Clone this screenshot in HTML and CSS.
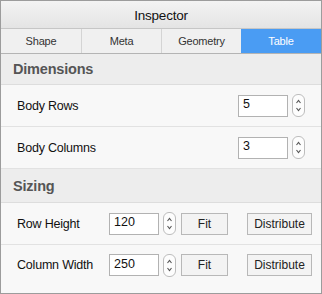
FILE: index.html
```html
<!DOCTYPE html>
<html lang="en">
<head>
    <meta charset="UTF-8">
    <title>Inspector</title>
    <link rel="stylesheet" href="styles.css">
</head>
<body>
    <div class="inspector">
        <div class="title-bar">Inspector</div>

        <div class="tabs">
            <div class="tab">Shape</div>
            <div class="tab">Meta</div>
            <div class="tab">Geometry</div>
            <div class="tab active">Table</div>
        </div>

        <!-- Dimensions -->
        <div class="section-header">Dimensions</div>
        <div class="row">
            <span class="label">Body Rows</span>
            <div class="controls">
                <input class="num" type="text" value="5">
                <span class="stepper"><svg width="11" height="21" viewBox="0 0 11 21"><path d="M3.5 8 L5.5 5.5 L7.5 8 M3.5 13 L5.5 15.5 L7.5 13" fill="none" stroke="#555" stroke-width="1.1"/></svg></span>
            </div>
        </div>
        <div class="row">
            <span class="label">Body Columns</span>
            <div class="controls">
                <input class="num" type="text" value="3">
                <span class="stepper"><svg width="11" height="21" viewBox="0 0 11 21"><path d="M3.5 8 L5.5 5.5 L7.5 8 M3.5 13 L5.5 15.5 L7.5 13" fill="none" stroke="#555" stroke-width="1.1"/></svg></span>
            </div>
        </div>

        <!-- Sizing -->
        <div class="section-header tall">Sizing</div>
        <div class="row sizing">
            <span class="label">Row Height</span>
            <input class="num" type="text" value="120">
            <span class="stepper"><svg width="11" height="21" viewBox="0 0 11 21"><path d="M3.5 8 L5.5 5.5 L7.5 8 M3.5 13 L5.5 15.5 L7.5 13" fill="none" stroke="#555" stroke-width="1.1"/></svg></span>
            <button class="btn fit">Fit</button>
            <button class="btn distribute">Distribute</button>
        </div>
        <div class="row sizing last">
            <span class="label">Column Width</span>
            <input class="num" type="text" value="250">
            <span class="stepper"><svg width="11" height="21" viewBox="0 0 11 21"><path d="M3.5 8 L5.5 5.5 L7.5 8 M3.5 13 L5.5 15.5 L7.5 13" fill="none" stroke="#555" stroke-width="1.1"/></svg></span>
            <button class="btn fit">Fit</button>
            <button class="btn distribute">Distribute</button>
        </div>
    </div>
</body>
</html>
```

FILE: styles.css
```css
* {
    margin: 0;
    padding: 0;
    box-sizing: border-box;
    font-family: 'Liberation Sans', Arial, sans-serif;
}

body {
    background: #ffffff;
}

.inspector {
    width: 322px;
    height: 294px;
    border: 1px solid #9c9c9c;
    background: #f7f7f7;
    display: flex;
    flex-direction: column;
}

.title-bar {
    height: 28px;
    border-bottom: 1px solid #c6c6c6;
    background: linear-gradient(to bottom, #f3f3f3, #e4e4e4);
    color: #111;
    font-size: 13.5px;
    letter-spacing: -0.2px;
    display: flex;
    align-items: center;
    justify-content: center;
    padding-top: 1px;
}

.tabs {
    display: flex;
    height: 25px;
    border-bottom: 1px solid #b4b4b4;
    background: #f0f0f0;
}

.tab {
    width: 80px;
    font-size: 11px;
    letter-spacing: -0.2px;
    color: #333;
    display: flex;
    align-items: center;
    justify-content: center;
}

.tab + .tab {
    border-left: 1px solid #d4d4d4;
}

.tab.active {
    background: #4a9cf3;
    color: #ffffff;
    border-left: none;
}

.section-header {
    height: 31px;
    background: #ededed;
    border-bottom: 1px solid #dddddd;
    color: #555;
    font-size: 14.5px;
    letter-spacing: -0.2px;
    font-weight: 700;
    padding-left: 12px;
    display: flex;
    align-items: center;
}

.section-header.tall {
    height: 34px;
}

.row {
    height: 42px;
    border-bottom: 1px solid #e2e2e2;
    background: #f8f8f8;
    display: flex;
    align-items: center;
    padding: 0 16px 0 16px;
    font-size: 12.5px;
    letter-spacing: -0.2px;
    color: #111;
}

.row .label {
    flex: 1;
    padding-top: 1px;
}

.controls {
    display: flex;
    align-items: center;
}

.num {
    width: 50px;
    height: 22px;
    border: 1px solid #b2b2b2;
    background: #ffffff;
    font-size: 12.5px;
    color: #111;
    padding: 0 4px 3px;
    outline: none;
}

.stepper {
    width: 13px;
    height: 23px;
    margin-left: 4px;
    border: 1px solid #bdbdbd;
    border-radius: 6px;
    background: #fdfdfd;
    display: flex;
    align-items: center;
    justify-content: center;
}

.sizing {
    padding: 0 9px 0 16px;
}

.sizing .label {
    flex: none;
    width: 92px;
}

.btn {
    height: 22px;
    border: 1px solid #b8b8b8;
    background: #f3f3f3;
    font-size: 12px;
    color: #222;
}

.fit {
    width: 47px;
    margin-left: 5px;
}

.distribute {
    width: 65px;
    margin-left: 19px;
}

.row.last {
    flex: 1;
    border-bottom: none;
    align-items: flex-start;
    padding-top: 9px;
}

.row.last .label {
    padding-top: 4px;
}
```
